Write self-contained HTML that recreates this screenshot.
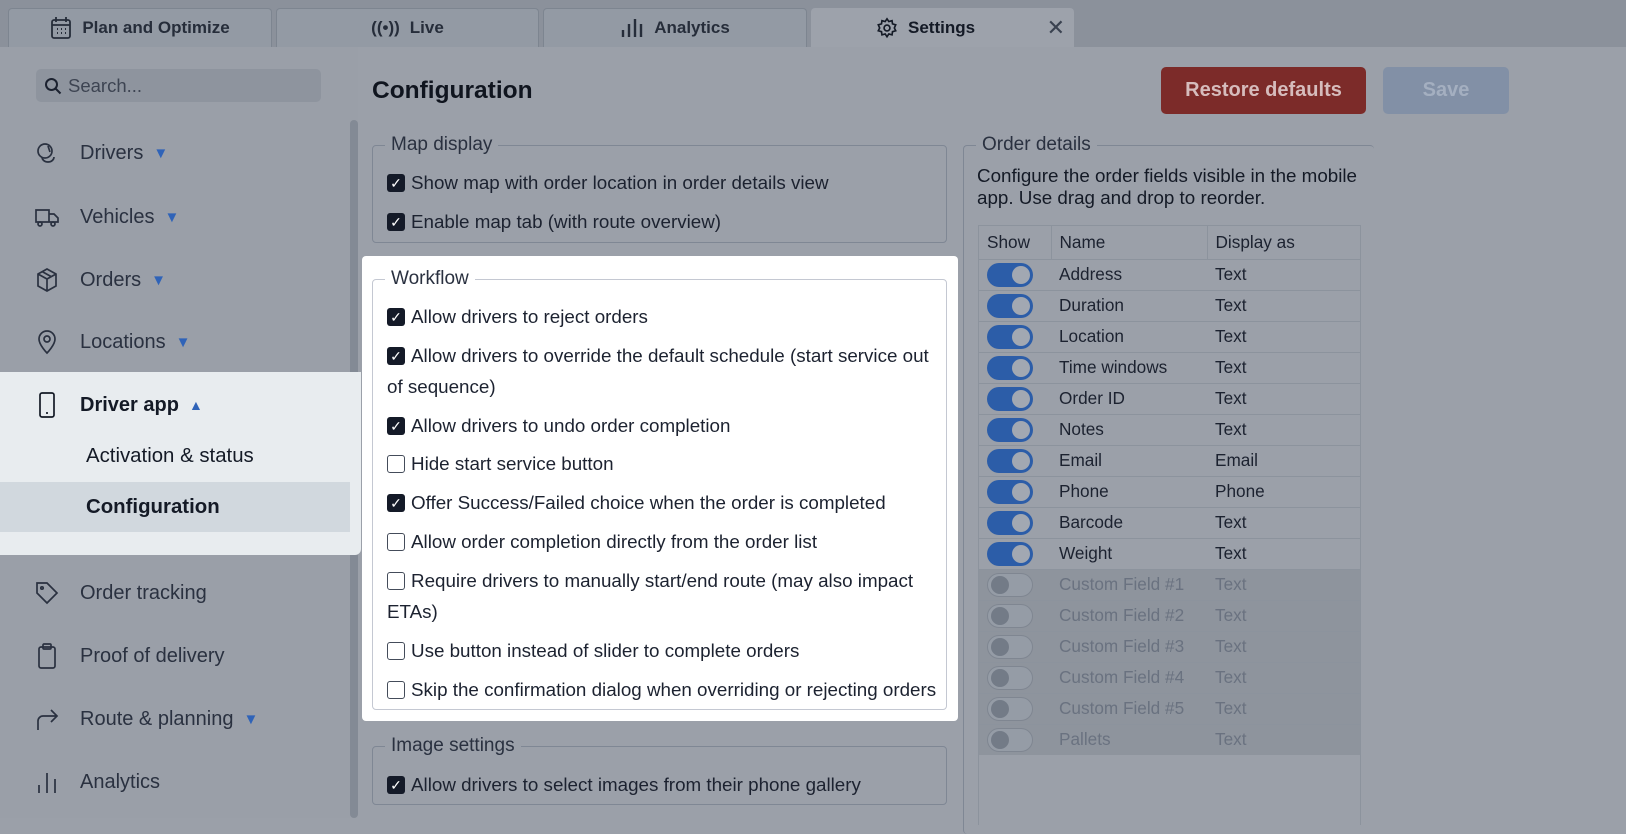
<!DOCTYPE html>
<html><head><meta charset="utf-8"><style>
*{box-sizing:border-box;margin:0;padding:0}
body{width:1626px;height:818px;overflow:hidden;background:#9ba0a9;font-family:"Liberation Sans",Arial,sans-serif;color:#1c2230;position:relative}
.abs{position:absolute}
.tabbar{left:0;top:0;width:1626px;height:47px;background:#8b919b}
.tab{top:8px;height:39px;background:#939aa4;border:1px solid #7d8590;border-bottom:none;border-radius:4px 4px 0 0;display:flex;align-items:center;justify-content:center;font-weight:bold;font-size:17px;color:#262d3a;gap:10px}
.side{left:0;top:47px;width:358px;height:771px;background:#9a9fa8}
.nav{position:absolute;left:34px;font-size:20px;color:#2a3140;display:flex;align-items:center;gap:20px}
.nav svg{width:26px;height:26px;fill:none;stroke:#2a3140;stroke-width:1.7}
.caret{color:#2f63b8;font-size:15px;margin-left:-10px}
fieldset{position:absolute;border:1px solid #7f8794;border-radius:4px;padding:0}
legend{font-size:19px;margin-left:12px;padding:0 6px;color:#2a3140}
.row{position:absolute;left:14px;font-size:18.8px;display:flex;align-items:center;gap:6px;white-space:nowrap}
.cb{width:18px;height:18px;border-radius:3px;background:#141a28;display:inline-flex;align-items:center;justify-content:center;color:#fff;font-size:14px;flex:none}
.cb.off{background:#fff;border:1px solid #444c5a}
table{border-collapse:collapse;font-size:17.2px}
td{height:31px;border-top:1px solid #8c939d;padding:0 8px}
.tg{width:46px;height:24px;border-radius:12px;background:#2c5da8;position:relative;display:inline-block;vertical-align:middle}
.tg::after{content:"";position:absolute;right:3px;top:3px;width:18px;height:18px;border-radius:50%;background:#a2a8b2}
.tg.off{background:#959ca6;border:1px solid #7f8691}
.tg.off::after{left:3px;right:auto;top:2px;background:#737b87}
tr.dis{background:#8e949d;color:#6a7280}
</style></head><body>
<div class="abs tabbar"></div>
<div class="abs tab" style="left:8px;width:264px"><svg width="22" height="24" viewBox="0 0 22 24" fill="none" stroke="#262d3a" stroke-width="1.8"><rect x="2" y="4" width="18" height="18" rx="2"/><path d="M6 1v5M16 1v5M2 9h18"/><path d="M7 13h1M11 13h1M15 13h1M7 17h1M11 17h1M15 17h1" stroke-width="2"/></svg>Plan and Optimize</div>
<div class="abs tab" style="left:276px;width:263px"><span style="font-weight:bold">((•))</span>Live</div>
<div class="abs tab" style="left:543px;width:264px"><svg width="24" height="20" viewBox="0 0 24 20" stroke="#262d3a" stroke-width="2.4"><path d="M3 19v-7M9 19V6M15 19V1M21 19V6"/></svg>Analytics</div>
<div class="abs tab" style="left:811px;width:263px;background:#9da2ab;border-color:#9da2ab;color:#141a26;justify-content:flex-start;padding-left:64px"><svg width="22" height="22" viewBox="0 0 24 24" fill="none" stroke="#141a26" stroke-width="1.8"><circle cx="12" cy="12" r="3.2"/><path d="M12 2l2 3 3.5-1 .5 3.5 3.5 1-1.5 3.5 1.5 3-3.5 1-.5 3.5-3.5-1-2 3-2-3-3.5 1-.5-3.5-3.5-1 1.5-3-1.5-3.5 3.5-1L6.5 4 10 5z"/></svg>Settings<span style="position:absolute;right:8px;font-size:22px;color:#3a4250;font-weight:normal">✕</span></div>

<div class="abs side"></div>
<div class="abs" style="left:350px;top:120px;width:8px;height:698px;background:#838a95;border-radius:4px"></div>
<div class="abs" style="left:36px;top:69px;width:285px;height:33px;background:#8e949e;border-radius:5px;display:flex;align-items:center;padding-left:8px;gap:6px;font-size:18.5px;color:#3d4452"><svg width="18" height="18" viewBox="0 0 18 18" fill="none" stroke="#1c2230" stroke-width="2"><circle cx="7.5" cy="7.5" r="5.5"/><path d="M11.5 11.5l5 5"/></svg>Search...</div>

<div class="nav" style="top:140px"><svg viewBox="0 0 26 26"><circle cx="11" cy="11" r="7"/><path d="M8 17a6 5 0 0 0 12 0M14 6l2 6"/></svg>Drivers<span class="caret">▼</span></div>
<div class="nav" style="top:204px"><svg viewBox="0 0 26 26"><path d="M2 6h13v12H2zM15 10h5l4 4v4h-9"/><circle cx="6" cy="20" r="2"/><circle cx="19" cy="20" r="2"/></svg>Vehicles<span class="caret">▼</span></div>
<div class="nav" style="top:267px"><svg viewBox="0 0 26 26"><path d="M13 2l9 5v12l-9 5-9-5V7zM4 7l9 5 9-5M13 12v12M8 4.5l9 5"/></svg>Orders<span class="caret">▼</span></div>
<div class="nav" style="top:329px"><svg viewBox="0 0 26 26"><path d="M13 24s-8-8-8-14a8 8 0 0 1 16 0c0 6-8 14-8 14z"/><circle cx="13" cy="10" r="3"/></svg>Locations<span class="caret">▼</span></div>

<div class="abs" style="left:0;top:372px;width:361px;height:183px;background:#e8ecef;border-radius:0 0 6px 0"></div>
<div class="abs" style="left:0;top:482px;width:350px;height:50px;background:#d1d8de"></div>
<div class="nav" style="top:392px;font-weight:bold;color:#141a26"><svg viewBox="0 0 26 26" style="stroke:#141a26"><rect x="6" y="1" width="14" height="24" rx="2"/><path d="M12 21h2"/></svg>Driver app<span class="caret" style="font-size:14px">▲</span></div>
<div class="abs" style="left:86px;top:445px;font-size:20.4px;color:#141a26">Activation &amp; status</div>
<div class="abs" style="left:86px;top:496px;font-size:20.4px;font-weight:bold;color:#141a26">Configuration</div>

<div class="nav" style="top:580px"><svg viewBox="0 0 26 26"><path d="M3 3h10l10 10-10 10L3 13z"/><circle cx="8" cy="8" r="1.2"/></svg>Order tracking</div>
<div class="nav" style="top:643px"><svg viewBox="0 0 26 26"><rect x="5" y="4" width="16" height="21" rx="2"/><rect x="9" y="1" width="8" height="5" rx="1"/></svg>Proof of delivery</div>
<div class="nav" style="top:706px"><svg viewBox="0 0 26 26"><path d="M4 24V15a5 5 0 0 1 5-5h14M17 4l6 6-6 6"/></svg>Route &amp; planning<span class="caret">▼</span></div>
<div class="nav" style="top:769px"><svg viewBox="0 0 26 26"><path d="M5 24v-8M13 24V4M21 24V10"/></svg>Analytics</div>

<div class="abs" style="left:372px;top:77px;font-size:24.5px;font-weight:bold;color:#10151f">Configuration</div>
<div class="abs" style="left:1161px;top:67px;width:205px;height:47px;background:#7c2b29;border-radius:5px;color:#d6bcbc;font-weight:bold;font-size:20px;display:flex;align-items:center;justify-content:center">Restore defaults</div>
<div class="abs" style="left:1383px;top:67px;width:126px;height:47px;background:#8290a6;border-radius:5px;color:#a4afc0;font-weight:bold;font-size:20px;display:flex;align-items:center;justify-content:center">Save</div>

<fieldset style="left:372px;top:134px;width:575px;height:109px"><legend>Map display</legend>
<div class="row" style="top:16px"><span class="cb">✓</span>Show map with order location in order details view</div>
<div class="row" style="top:55px"><span class="cb">✓</span>Enable map tab (with route overview)</div></fieldset>

<div class="abs" style="left:362px;top:256px;width:596px;height:465px;background:#fff;border-radius:4px"></div>
<fieldset style="left:372px;top:268px;width:575px;height:442px;border-color:#c4c8d2"><legend>Workflow</legend>
<div class="row" style="top:16px"><span class="cb">✓</span>Allow drivers to reject orders</div>
<div class="row" style="top:55px"><span class="cb">✓</span>Allow drivers to override the default schedule (start service out</div>
<div class="row" style="top:86px">of sequence)</div>
<div class="row" style="top:125px"><span class="cb">✓</span>Allow drivers to undo order completion</div>
<div class="row" style="top:163px"><span class="cb off"></span>Hide start service button</div>
<div class="row" style="top:202px"><span class="cb">✓</span>Offer Success/Failed choice when the order is completed</div>
<div class="row" style="top:241px"><span class="cb off"></span>Allow order completion directly from the order list</div>
<div class="row" style="top:280px"><span class="cb off"></span>Require drivers to manually start/end route (may also impact</div>
<div class="row" style="top:311px">ETAs)</div>
<div class="row" style="top:350px"><span class="cb off"></span>Use button instead of slider to complete orders</div>
<div class="row" style="top:389px"><span class="cb off"></span>Skip the confirmation dialog when overriding or rejecting orders</div>
</fieldset>

<fieldset style="left:372px;top:735px;width:575px;height:70px"><legend>Image settings</legend>
<div class="row" style="top:17px"><span class="cb">✓</span>Allow drivers to select images from their phone gallery</div></fieldset>

<fieldset style="left:963px;top:134px;width:411px;height:700px;border-right:none;border-bottom:none"><legend>Order details</legend></fieldset>
<div class="abs" style="left:977px;top:165px;font-size:18.8px;line-height:22px;color:#141a26">Configure the order fields visible in the mobile<br>app. Use drag and drop to reorder.</div>
<div class="abs" style="left:978px;top:225px;width:383px;height:600px;border:1px solid #8c939d;border-bottom:none">
<table style="width:381px">
<tr style="height:33px"><td style="width:72px;border-top:none;border-right:1px solid #8c939d">Show</td><td style="width:156px;border-top:none;border-right:1px solid #8c939d">Name</td><td style="border-top:none">Display as</td></tr>
<tr><td><span class="tg"></span></td><td>Address</td><td>Text</td></tr>
<tr><td><span class="tg"></span></td><td>Duration</td><td>Text</td></tr>
<tr><td><span class="tg"></span></td><td>Location</td><td>Text</td></tr>
<tr><td><span class="tg"></span></td><td>Time windows</td><td>Text</td></tr>
<tr><td><span class="tg"></span></td><td>Order ID</td><td>Text</td></tr>
<tr><td><span class="tg"></span></td><td>Notes</td><td>Text</td></tr>
<tr><td><span class="tg"></span></td><td>Email</td><td>Email</td></tr>
<tr><td><span class="tg"></span></td><td>Phone</td><td>Phone</td></tr>
<tr><td><span class="tg"></span></td><td>Barcode</td><td>Text</td></tr>
<tr><td><span class="tg"></span></td><td>Weight</td><td>Text</td></tr>
<tr class="dis"><td><span class="tg off"></span></td><td>Custom Field #1</td><td>Text</td></tr>
<tr class="dis"><td><span class="tg off"></span></td><td>Custom Field #2</td><td>Text</td></tr>
<tr class="dis"><td><span class="tg off"></span></td><td>Custom Field #3</td><td>Text</td></tr>
<tr class="dis"><td><span class="tg off"></span></td><td>Custom Field #4</td><td>Text</td></tr>
<tr class="dis"><td><span class="tg off"></span></td><td>Custom Field #5</td><td>Text</td></tr>
<tr class="dis"><td><span class="tg off"></span></td><td>Pallets</td><td>Text</td></tr>
</table></div>
</body></html>
